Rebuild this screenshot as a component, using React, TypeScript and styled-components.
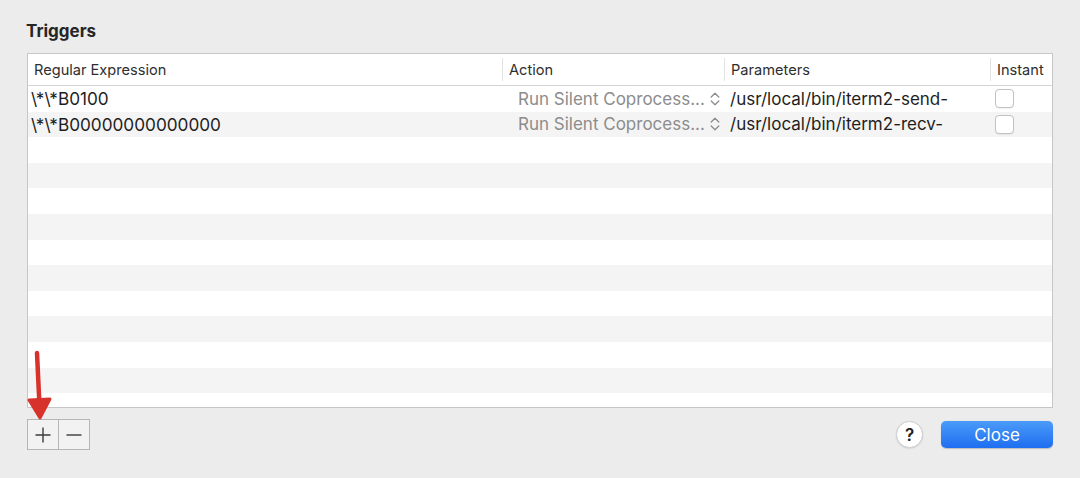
import React from "react";
import styled, { createGlobalStyle } from "styled-components";

const GlobalStyle = createGlobalStyle`
    html, body {
        margin: 0;
        padding: 0;
        background: #ececec;
        font-family: Inter, "Noto Sans", "Liberation Sans", sans-serif;
        -webkit-font-smoothing: antialiased;
    }
`;

interface Trigger {
    regex: string;
    action: string;
    params: string;
    instant: boolean;
}

const triggers: Trigger[] = [
    { regex: "\\*\\*B0100", action: "Run Silent Coprocess...", params: "/usr/local/bin/iterm2-send-", instant: false },
    { regex: "\\*\\*B00000000000000", action: "Run Silent Coprocess...", params: "/usr/local/bin/iterm2-recv-", instant: false },
];

const TOTAL_ROWS = 13;

export default function App() {
    const rows = Array.from({ length: TOTAL_ROWS }, (_, i) => triggers[i]);

    return (
        <Page>
            <GlobalStyle />
            <Title>Triggers</Title>
            <Table>
                <HeaderRow>
                    <HeaderCell>Regular Expression</HeaderCell>
                    <HeaderCell divider>Action</HeaderCell>
                    <HeaderCell divider>Parameters</HeaderCell>
                    <HeaderCell divider>Instant</HeaderCell>
                </HeaderRow>
                <Body>
                    {rows.map((t, i) => (
                        <Row key={i} striped={i % 2 === 1}>
                            {t && (
                                <>
                                    <RegexCell>{t.regex}</RegexCell>
                                    <ActionCell>
                                        <span>{t.action}</span>
                                        <Chevron width="12" height="16" viewBox="0 0 12 16">
                                            <path d="M2.2 6 L6 2.2 L9.8 6 M2.2 10 L6 13.8 L9.8 10" />
                                        </Chevron>
                                    </ActionCell>
                                    <ParamCell>{t.params}</ParamCell>
                                    <CheckCell>
                                        <Checkbox />
                                    </CheckCell>
                                </>
                            )}
                        </Row>
                    ))}
                </Body>
            </Table>
            <Footer>
                <Segmented>
                    <SegButton>
                        <svg width="16" height="16" viewBox="0 0 16 16">
                            <path d="M8 0.5 V15.5 M0.5 8 H15.5" stroke="#3c3c3c" strokeWidth="1.4" />
                        </svg>
                    </SegButton>
                    <SegButton>
                        <svg width="16" height="16" viewBox="0 0 16 16">
                            <path d="M0.5 8 H15.5" stroke="#3c3c3c" strokeWidth="1.4" />
                        </svg>
                    </SegButton>
                </Segmented>
                <RightGroup>
                    <HelpButton>?</HelpButton>
                    <CloseButton>Close</CloseButton>
                </RightGroup>
            </Footer>
            <Arrow width="30" height="72" viewBox="0 0 30 72">
                <path d="M12 3 L14.5 56" stroke="#d8322c" strokeWidth="4.5" strokeLinecap="round" fill="none" />
                <path d="M4 50 L15 68 L25 49 Z" fill="#d8322c" stroke="#d8322c" strokeWidth="3" strokeLinejoin="round" />
            </Arrow>
        </Page>
    );
}

const Page = styled.div`
    position: relative;
    width: 1080px;
    height: 478px;
    box-sizing: border-box;
    padding: 19px 27px 0 27px;
    overflow: hidden;
`;

const Title = styled.div`
    font-size: 17px;
    font-weight: 700;
    color: #262626;
    height: 24px;
    line-height: 24px;
    margin-left: -1px;
    margin-bottom: 10px;
`;

const Table = styled.div`
    background: #ffffff;
    border: 1px solid #c6c6c6;
    height: 355px;
    box-sizing: border-box;
    overflow: hidden;
`;

const columns = "474px 222px 266px 1fr";

const HeaderRow = styled.div`
    display: grid;
    grid-template-columns: ${columns};
    height: 31px;
    border-bottom: 1px solid #d4d4d4;
`;

const HeaderCell = styled.div<{ divider?: boolean }>`
    display: flex;
    align-items: center;
    padding-left: 6px;
    font-size: 14.6px;
    color: #2e2e2e;
    border-left: ${(p) => (p.divider ? "1px solid #e2e2e2" : "none")};
    margin: 4px 0;
    white-space: nowrap;
`;

const Body = styled.div`
    display: flex;
    flex-direction: column;
`;

const Row = styled.div<{ striped: boolean }>`
    display: grid;
    grid-template-columns: ${columns};
    height: 25.6px;
    flex-shrink: 0;
    align-items: center;
    background: ${(p) => (p.striped ? "#f4f4f4" : "#ffffff")};
`;

const RegexCell = styled.div`
    padding-left: 3px;
    font-size: 17.2px;
    color: #1e1e1e;
    white-space: nowrap;
`;

const ActionCell = styled.div`
    display: flex;
    align-items: center;
    padding-left: 16px;
    font-size: 17px;
    color: #8c8c8c;
    white-space: nowrap;
`;

const Chevron = styled.svg`
    margin-left: 4px;
    fill: none;
    stroke: #8c8c8c;
    stroke-width: 1.3;
    stroke-linecap: round;
    stroke-linejoin: round;
`;

const ParamCell = styled.div`
    padding-left: 6px;
    font-size: 17px;
    color: #1e1e1e;
    white-space: nowrap;
    overflow: hidden;
`;

const CheckCell = styled.div`
    display: flex;
    align-items: center;
    padding-left: 5px;
`;

const Checkbox = styled.div`
    width: 17px;
    height: 17px;
    border: 1px solid #c2c2c2;
    border-radius: 4px;
    background: #ffffff;
    box-shadow: 0 0.5px 1px rgba(0, 0, 0, 0.06);
`;

const Footer = styled.div`
    display: flex;
    justify-content: space-between;
    align-items: center;
    margin-top: 11px;
`;

const Segmented = styled.div`
    display: flex;
    border: 1px solid #b5b5b5;
    height: 31px;
    box-sizing: border-box;
    background: #f2f2f2;
`;

const SegButton = styled.div`
    width: 30px;
    display: flex;
    align-items: center;
    justify-content: center;
    & + & {
        border-left: 1px solid #b5b5b5;
    }
`;

const RightGroup = styled.div`
    display: flex;
    align-items: center;
    gap: 18px;
`;

const HelpButton = styled.div`
    width: 25px;
    height: 25px;
    border-radius: 50%;
    background: #ffffff;
    border: 1px solid #cfcfcf;
    box-shadow: 0 0.5px 1.5px rgba(0, 0, 0, 0.15);
    display: flex;
    align-items: center;
    justify-content: center;
    font-size: 17px;
    font-weight: 600;
    color: #222;
`;

const CloseButton = styled.div`
    width: 112px;
    height: 27px;
    border-radius: 5px;
    background: linear-gradient(#4b9bf9, #1e6ef1);
    box-shadow: 0 0.5px 1px rgba(0, 0, 0, 0.2);
    display: flex;
    align-items: center;
    justify-content: center;
    font-size: 17px;
    color: #ffffff;
`;

const Arrow = styled.svg`
    position: absolute;
    left: 25px;
    top: 350px;
`;
